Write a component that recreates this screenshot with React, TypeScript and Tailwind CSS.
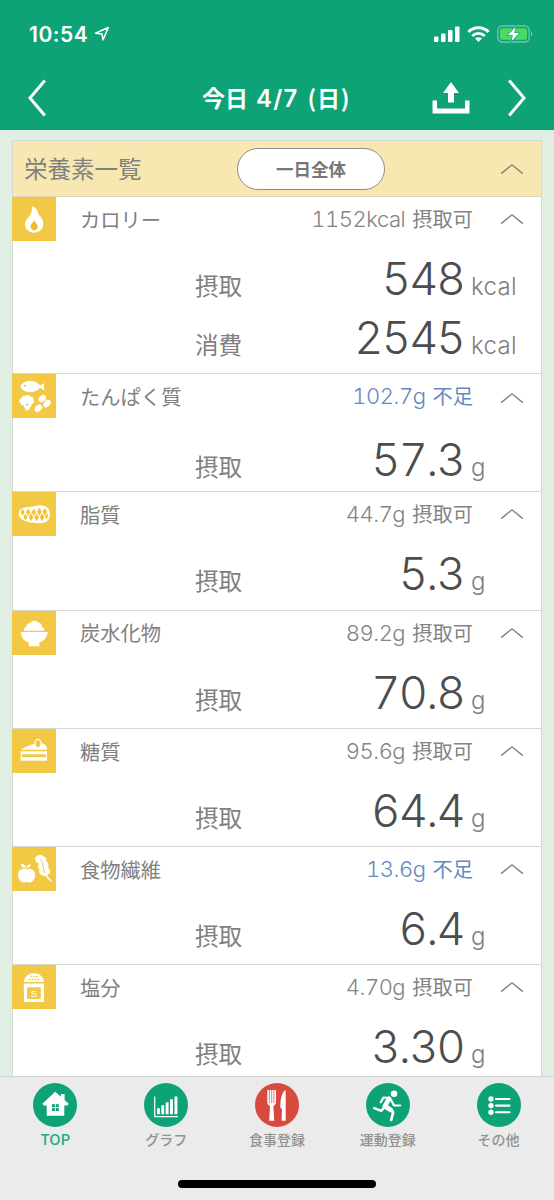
import React from 'react';
import { clsx } from 'clsx';

const FlameIcon = () => (
  <svg viewBox="0 0 44 44" className="w-full h-full">
    <path
      d="M20 9.2C24 10.2 26.2 14 26.5 17.6C29.4 20.2 31.3 23.2 31.3 26.8C31.3 32.4 27 35.7 22.1 35.7C17 35.7 13 32.4 13 27C13 20.5 21.5 19 20 9.2Z"
      fill="#fff"
    />
    <path d="M22.3 23.2C22.9 25.2 25.7 26.8 25.7 29.8C25.7 32 24.2 33.3 22.2 33.3C20.2 33.3 18.6 32 18.6 29.8C18.6 26.8 21.8 25.5 22.3 23.2Z" fill="#eebb28" />
  </svg>
);

const ProteinIcon = () => (
  <svg viewBox="0 0 44 44" className="w-full h-full" fill="#fff">
    <path d="M8.2 12.5C10 8.8 14 7.1 18.5 7.1C22.8 7.1 25.8 9 28 11.4L32.4 9C31.6 11.5 31.6 14 32.6 16.4L28 13.8C25.8 16.3 22.5 18.2 18.5 18.2C13.5 18.2 9.8 16.2 8.2 12.5Z" />
    <circle cx="13" cy="11.9" r="1.1" fill="#f2c945" />
    <path d="M8.5 29C6.5 28 6.8 25.2 9 25C9 22.4 11.5 21.4 13 22.2C14.6 20.4 17.6 20.8 18.6 22.8C21 22.6 22.3 24.4 21.6 26.2C22.8 28 21.6 29.8 20 29.8L16.8 36L13.8 36.6L11.6 31.2C10.4 31.6 8.8 30.8 8.5 29Z" />
    <path d="M13.4 29.8L14.8 32L16.4 29" fill="none" stroke="#f2c945" />
    <ellipse cx="30.2" cy="24.6" rx="4.2" ry="3" transform="rotate(-45 30.2 24.6)" />
    <ellipse cx="35" cy="29.6" rx="4.3" ry="3" transform="rotate(-50 35 29.6)" />
    <ellipse cx="26.4" cy="34.2" rx="4.3" ry="3" transform="rotate(-45 26.4 34.2)" />
  </svg>
);

const FatIcon = () => (
  <svg viewBox="0 0 44 44" className="w-full h-full">
    <path
      d="M6.8 21C7.2 17 11 15 16 15.2C21 15.3 25 12.8 30 13.4C35.5 14 38.4 18 37.9 23.5C37.4 28.7 33.5 31.3 28 31.2C20 31.4 6.2 29.5 6.8 21Z"
      fill="#fff"
    />
    <path
      d="M10.6 17.2L12.4 20.2L10.6 23.2L8.8 20.2ZM16.2 17L18.2 20.2L16.2 23.4L14.2 20.2ZM21.8 17L23.8 20.2L21.8 23.4L19.8 20.2ZM27.4 16L29.4 19.6L27.4 23.2L25.4 19.6ZM32.8 16.4L34.8 19.8L32.8 23.2L30.8 19.8ZM13.4 22L15.2 25L13.4 28L11.6 25ZM19 21.8L21 25.2L19 28.8L17 25.2ZM24.6 21.8L26.6 25.2L24.6 28.8L22.6 25.2ZM30.1 21.6L32.1 25.2L30.1 28.8L28.1 25.2ZM35 21.8L36 23.4L34.6 26.8L33.4 24.8Z"
      fill="#f0c12f"
      stroke="#f0c12f"
      strokeWidth="0.5"
    />
  </svg>
);

const RiceIcon = () => (
  <svg viewBox="0 0 44 44" className="w-full h-full" fill="#fff">
    <path d="M12 19.7C11.5 17.5 13 16 14.5 15.5C14.5 13 16.5 11.8 18.3 12C19.5 9.3 24.5 9 26 11.6C28.6 11.6 29.8 13.4 29.7 15.4C31.7 16 32.6 17.8 32.3 19.7Z" />
    <path d="M8.7 21.1H35.7C35.2 26.2 32 30.2 27.3 31.6V35.3H16.7V31.6C12 30.2 9.2 26.2 8.7 21.1Z" />
  </svg>
);

const CakeIcon = () => (
  <svg viewBox="0 0 44 44" className="w-full h-full" fill="#fff">
    <path d="M8.7 20.8C14 17.5 19 15.5 24 14.5H31C33.5 15.2 35 17.5 35 20.8Z" />
    <ellipse cx="26" cy="14.6" rx="3.1" ry="4.2" fill="#f2c945" stroke="#fff" strokeWidth="1.3" />
    <path d="M8.7 22.3H35V31.7H8.7Z" />
    <path d="M10 25.2H34V28.2H10Z" fill="#f2c945" />
  </svg>
);

const FiberIcon = () => (
  <svg viewBox="0 0 44 44" className="w-full h-full" fill="#fff">
    <path d="M14.6 22.4C18.5 20.5 23.2 22.8 23.2 28C23.2 32.3 20 35.8 16.8 35.6C15.3 35.2 14 35.2 12.5 35.6C9 35.8 6 32.3 6 28C6 22.8 10.8 20.5 14.6 22.4Z" />
    <path d="M14.3 22.5C14.2 20.8 13.6 19.4 12.6 18.4" stroke="#fff" strokeWidth="1" fill="none" />
    <path d="M13.2 20.8C10 21.3 8.8 19.2 9 16.8C12 16.8 13.6 18.4 13.2 20.8Z" />
    <path d="M14.8 20.6C15 18.2 16.6 17.2 18.7 17.2C18.7 19.4 17 20.8 14.8 20.6Z" />
    <path d="M23.2 11C24.2 8 29 7 31.3 9.2C34.3 9.5 34.8 12.6 34.3 14.6C36.8 15.8 37 18.8 36 20.6C38.4 22.4 38.8 25.5 37.2 26.8L35.5 27.8C34.7 29.5 32.2 29.8 30.5 28.3C27.4 27.2 26.3 24.4 27.8 22.5C25.4 21 25.3 18 27.2 16.4C25 16.6 22.8 14 23.2 11Z" />
    <path d="M28.6 12.5C32 17 30.5 23 34.5 28.5" fill="none" stroke="#f2c945" strokeWidth="1" />
    <path d="M33.5 26.5C35 30 36.6 32 39 34" fill="none" stroke="#fff" strokeWidth="1.5" strokeLinecap="round" />
  </svg>
);

const SaltIcon = () => (
  <svg viewBox="0 0 44 44" className="w-full h-full" fill="#fff">
    <path d="M11.7 17C12.5 11.5 16.5 8.2 21.9 8.2C27.3 8.2 31.3 11.5 32.1 17Z" />
    <path d="M18.5 11.5h1.6M21.2 11.5h1.6M23.9 11.5h1.6M17.2 14.4h1.6M20 14.4h1.6M22.8 14.4h1.6M25.6 14.4h1.6" stroke="#f2c945" strokeWidth="1.5" />
    <path d="M11.7 18.4H32.1L32 37H12.2Z" />
    <path d="M15 22.3H28.8V34H15Z" fill="#f2c945" />
    <text x="21.9" y="31.5" fontSize="9.5" textAnchor="middle" fontFamily="Liberation Sans, sans-serif">S</text>
  </svg>
);

type Nutrient = {
  name: string;
  status: string;
  state: string;
  short?: boolean;
  unit: string;
  values: { label: string; value: string }[];
  icon: React.FC;
  rowClass: string;
};

const NUTRIENTS: Nutrient[] = [
  {
    name: 'カロリー', status: '1152kcal', state: '摂取可', unit: 'kcal', icon: FlameIcon, rowClass: 'h-[177.2px]',
    values: [{ label: '摂取', value: '548' }, { label: '消費', value: '2545' }],
  },
  { name: 'たんぱく質', status: '102.7g', state: '不足', short: true, unit: 'g', values: [{ label: '摂取', value: '57.3' }], icon: ProteinIcon, rowClass: 'h-[118.2px]' },
  { name: '脂質', status: '44.7g', state: '摂取可', unit: 'g', values: [{ label: '摂取', value: '5.3' }], icon: FatIcon, rowClass: 'h-[118.2px]' },
  { name: '炭水化物', status: '89.2g', state: '摂取可', unit: 'g', values: [{ label: '摂取', value: '70.8' }], icon: RiceIcon, rowClass: 'h-[118.2px]' },
  { name: '糖質', status: '95.6g', state: '摂取可', unit: 'g', values: [{ label: '摂取', value: '64.4' }], icon: CakeIcon, rowClass: 'h-[118.2px]' },
  { name: '食物繊維', status: '13.6g', state: '不足', short: true, unit: 'g', values: [{ label: '摂取', value: '6.4' }], icon: FiberIcon, rowClass: 'h-[118.2px]' },
  { name: '塩分', status: '4.70g', state: '摂取可', unit: 'g', values: [{ label: '摂取', value: '3.30' }], icon: SaltIcon, rowClass: 'h-[118.2px]' },
];

const ChevronUp = () => (
  <svg width="24" height="12" viewBox="0 0 24 12" fill="none" stroke="#808080" strokeWidth="1.4">
    <path d="M1.2 10.6L12 1.8L22.8 10.6" />
  </svg>
);

const NutrientRow: React.FC<{ item: Nutrient }> = ({ item }) => {
  const Icon = item.icon;
  const isProtein = item.name === 'たんぱく質';

  return (
    <section className={clsx('shrink-0 border-b border-[#d6d8d6]', item.rowClass)}>
      <div className="flex items-center h-11">
        <div className="-ml-px w-11 h-11 bg-[#f2c945] shrink-0">
          <Icon />
        </div>
        <h3 className="ml-6 text-[20.3px] leading-none text-[#808080]">{item.name}</h3>
        <p className={clsx('ml-auto flex items-baseline leading-none', item.short ? 'text-[#6389c0]' : 'text-[#848484]')}>
          <span className="font-['Inter'] font-light tabular-nums text-[22px] tracking-[-0.5px]">{item.status}</span>
          <span className="ml-[7px] text-[20.3px]">{item.state}</span>
        </p>
        <div className={clsx('ml-[27px] mr-[17px]', isProtein && 'pt-1')}>
          <ChevronUp />
        </div>
      </div>
      <div className={clsx(isProtein ? 'pt-3' : 'pt-2')}>
        {item.values.map((v) => (
          <div key={v.label} className="flex items-baseline h-[59px] pl-[182px] leading-[59px]">
            <span className="text-[23.5px] text-[#808080]">{v.label}</span>
            <span className="flex-1 text-right font-['Inter'] font-light tabular-nums text-[45px] tracking-[-1.7px] text-[#4d4d4d]">{v.value}</span>
            <span className="w-[77px] pl-[7px] font-['Inter'] font-light text-[24px] tracking-[0.3px] text-[#808080]">{item.unit}</span>
          </div>
        ))}
      </div>
    </section>
  );
};

const StatusBar = () => (
  <div className="flex items-center h-[68px] pl-[29px] pr-5">
    <span className="font-['Inter'] font-semibold text-[21px] leading-none tracking-[0.5px]">10:54</span>
    <svg width="16" height="16" viewBox="0 0 16 16" className="ml-[6px]" fill="none" stroke="#fff" strokeWidth="1.5" strokeLinejoin="round">
      <path d="M14.3 1.5L1.5 7.3L8 8L9 14Z" />
    </svg>
    <svg width="26" height="17" viewBox="0 0 26 17" className="ml-auto" fill="#fff">
      <rect x="0" y="10.5" width="4.5" height="5.5" rx="1" />
      <rect x="7" y="7.5" width="4.5" height="8.5" rx="1" />
      <rect x="14" y="4" width="4.5" height="12" rx="1" />
      <rect x="21" y="0.5" width="4.5" height="15.5" rx="1" />
    </svg>
    <svg width="23" height="17" viewBox="0 0 23 17" className="ml-[7px]" fill="none" stroke="#fff" strokeWidth="3">
      <path d="M1.4 6C7 0.4 16 0.4 21.6 6" />
      <path d="M5.2 10C9 6.6 14 6.6 17.8 10" />
      <path d="M8 12.3C10 10.8 13 10.8 15 12.3L11.5 16Z" fill="#fff" stroke="none" />
    </svg>
    <svg width="37" height="18" viewBox="0 0 37 18" className="ml-[7px]">
      <rect x="0.8" y="1" width="31.4" height="16" rx="4.5" fill="none" stroke="#6fc6a9" strokeWidth="1.4" />
      <path d="M34 6.5C36 7.5 36 10.5 34 11.5Z" fill="#6fc6a9" />
      <rect x="3" y="3.2" width="27" height="11.6" rx="2.5" fill="#4cd964" />
      <path d="M18.5 2L11 10H15.8L14.5 16.3L22.2 8H17.2Z" fill="#fff" stroke="#0da376" strokeWidth="1.2" paintOrder="stroke" />
    </svg>
  </div>
);

const NavBar = () => (
  <div className="flex items-center h-[60px] pl-7 pr-7">
    <svg width="19" height="38" viewBox="0 0 19 38" fill="none" stroke="#fff" strokeWidth="3">
      <path d="M16.8 1.5L2 19L16.8 36.5" />
    </svg>
    <h1 className="flex items-baseline ml-[155px] font-bold text-[23px] leading-none whitespace-nowrap">
      <span>今日</span>
      <span className="ml-2 font-['Inter'] font-semibold text-[24px] tracking-[1.2px]">4/7</span>
      <span className="ml-[9px] tracking-[0.8px]">(日)</span>
    </h1>
    <svg width="38" height="34" viewBox="0 0 38 34" className="ml-auto" fill="#fff">
      <path d="M19 1L27 12H22V21.5H16V12H11Z" />
      <path d="M0.5 19.5H5V27.5H33V19.5H37.5V32.5H0.5Z" />
    </svg>
    <svg width="19" height="38" viewBox="0 0 19 38" className="ml-[37px]" fill="none" stroke="#fff" strokeWidth="3">
      <path d="M2.2 1.5L17 19L2.2 36.5" />
    </svg>
  </div>
);

const HomeIcon = () => (
  <svg viewBox="0 0 44 44" className="w-11 h-11" fill="#fff">
    <path d="M22.2 8.7L28 13.8V11H31.6V17L35.7 20.8L34.3 22.5H31.3V32.8H13.7V22.5H10.6L9.4 20.8Z" />
    <path d="M19 21.2H25.8V28H19Z" fill="#0da376" />
    <path d="M22.4 21V28.2M18.8 24.6H26" stroke="#fff" strokeWidth="0.9" />
  </svg>
);

const GraphIcon = () => (
  <svg viewBox="0 0 44 44" className="w-11 h-11" fill="#fff">
    <path d="M10.7 13.5V33.7H34" fill="none" stroke="#fff" strokeWidth="1.2" />
    <path d="M13 25.2h2.9v6.1H13zM17.3 22.2h2.9v9.1h-2.9zM21.7 19.2h2.9v12.1h-2.9zM26 16.2h2.9v15.1H26zM30.5 13.5h2.9v17.8h-2.9z" />
  </svg>
);

const MealIcon = () => (
  <svg viewBox="0 0 44 44" className="w-11 h-11" fill="#fff">
    <path d="M12.3 7H21V19.5C21 21.6 19.3 22.5 18.4 23L19.2 37.8H14.2L15 23C14 22.5 12.3 21.6 12.3 19.5Z" />
    <path d="M14.4 7V20M16.7 7V20M18.9 7V20" stroke="#d84a3f" strokeWidth="0.7" />
    <path d="M30.7 7V37.8H26.6L27 26.5L25.2 24C25.5 17 26.5 9 30.7 7Z" />
  </svg>
);

const ExerciseIcon = () => (
  <svg viewBox="0 0 44 44" className="w-11 h-11" fill="none" stroke="#fff" strokeLinecap="round" strokeLinejoin="round">
    <circle cx="28" cy="10.8" r="3.3" fill="#fff" stroke="none" />
    <path d="M23 15.8L18.8 23.3L24.8 27" strokeWidth="4.8" />
    <path d="M23 15L17.5 14.5L14.8 19.2" strokeWidth="2.2" />
    <path d="M24.6 16.2L28 22.4L34.2 22.5" strokeWidth="2.2" />
    <path d="M18.8 24L15.2 27.8L8.2 25.2" strokeWidth="2.5" />
    <path d="M24.5 26.8L27.2 29.3L25.2 37" strokeWidth="2.7" />
  </svg>
);

const MenuIcon = () => (
  <svg viewBox="0 0 44 44" className="w-11 h-11" fill="#fff">
    <circle cx="14" cy="16" r="2.7" />
    <circle cx="14" cy="22.6" r="2.7" />
    <circle cx="14" cy="29.2" r="2.7" />
    <path d="M19 16H32.5M19 22.6H32.5M19 29.2H32.5" stroke="#fff" strokeWidth="2.1" strokeLinecap="round" />
  </svg>
);

const TABS = [
  { label: 'TOP', icon: HomeIcon, circle: 'bg-[#0da376]', text: 'text-[#22ac84] text-[15px]' },
  { label: 'グラフ', icon: GraphIcon, circle: 'bg-[#0da376]', text: 'text-[#929292] text-[14px]' },
  { label: '食事登録', icon: MealIcon, circle: 'bg-[#d84a3f]', text: 'text-[#929292] text-[14px]' },
  { label: '運動登録', icon: ExerciseIcon, circle: 'bg-[#0da376]', text: 'text-[#929292] text-[14px]' },
  { label: 'その他', icon: MenuIcon, circle: 'bg-[#0da376]', text: 'text-[#929292] text-[14px]' },
];

const TabBar = () => (
  <nav className="shrink-0 flex flex-col items-center h-[124px] bg-[#ebebeb] border-t border-[#d2d4d2]">
    <div className="grid grid-cols-5 w-full pt-1.5">
      {TABS.map((tab) => (
        <div key={tab.label} className="flex flex-col items-center">
          <div className={clsx('w-11 h-11 rounded-full', tab.circle)}>
            <tab.icon />
          </div>
          <span className={clsx('mt-0.5 h-5 leading-5 font-medium', tab.text)}>{tab.label}</span>
        </div>
      ))}
    </div>
    <div className="mt-[31px] w-[198px] h-2 rounded-full bg-black" />
  </nav>
);

const App: React.FC = () => {
  return (
    <div className="flex flex-col w-[554px] h-[1200px] overflow-hidden bg-[#e0eee4] font-['Noto_Sans_CJK_JP',sans-serif]">
      <header className="shrink-0 h-[130px] bg-[#0da376] text-white">
        <StatusBar />
        <NavBar />
      </header>

      <main className="flex-1 min-h-0 overflow-hidden px-3 pt-[10px]">
        <div className="flex flex-col bg-white border border-[#d6d8d6]">
          <div className="shrink-0 flex items-center h-14 bg-[#f7e8b2] border-b border-[#dcd5bb] pl-[11px] pr-[17px]">
            <h2 className="w-[213px] text-[23.5px] leading-none text-[#808080]">栄養素一覧</h2>
            <button className="w-[148px] h-[42px] rounded-full border-[1.5px] border-[#8c8c8c] bg-white font-bold text-[17.5px] leading-none text-[#777]">
              一日全体
            </button>
            <div className="ml-auto">
              <ChevronUp />
            </div>
          </div>
          {NUTRIENTS.map((item) => (
            <NutrientRow key={item.name} item={item} />
          ))}
        </div>
      </main>

      <TabBar />
    </div>
  );
};

export default App;
